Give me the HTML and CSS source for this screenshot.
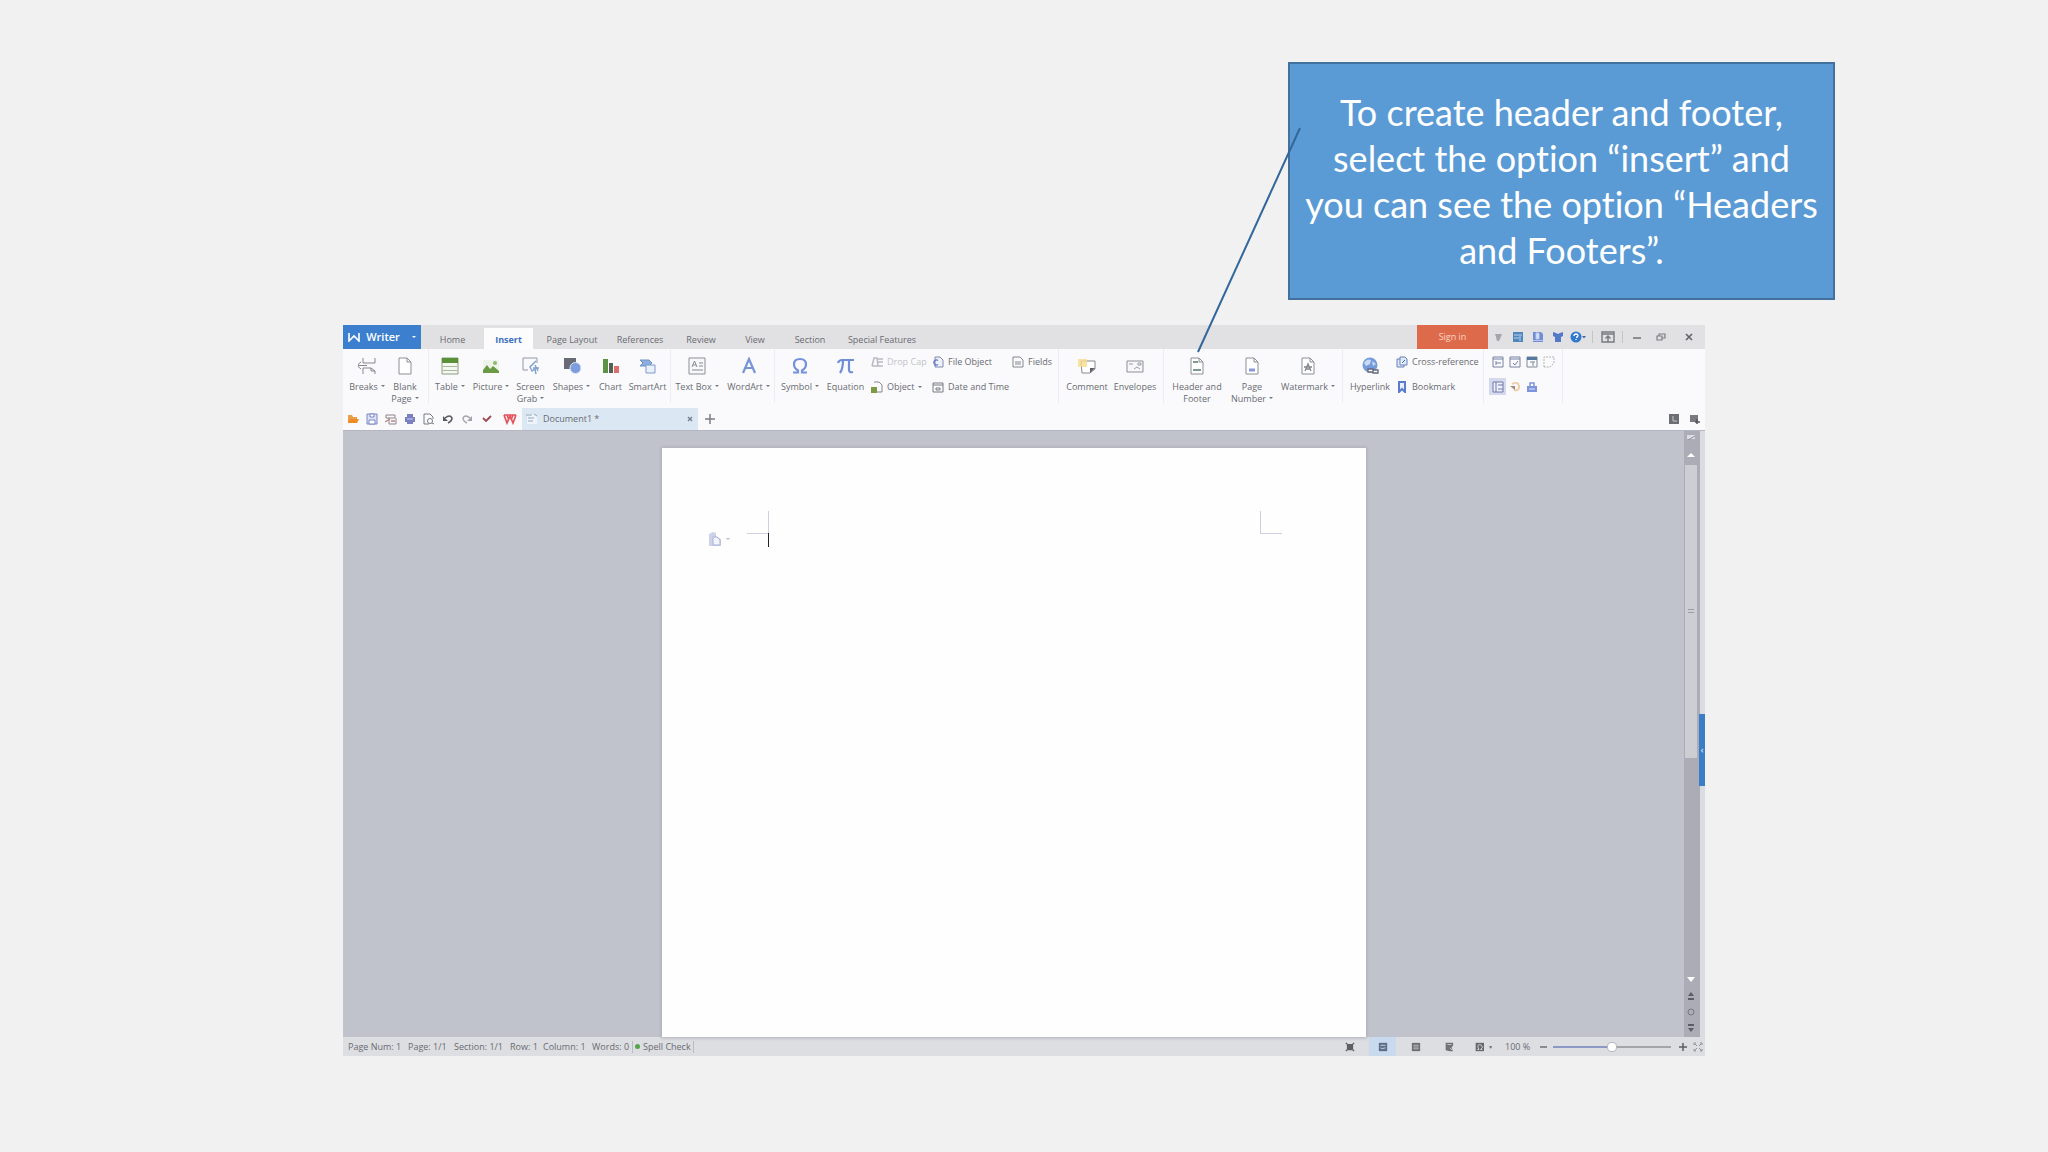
FILE: index.html
```html
<!DOCTYPE html>
<html lang="en">
<head>
<meta charset="utf-8">
<title>Writer - Insert header and footer</title>
<link rel="stylesheet" href="styles.css">
</head>
<body>
<svg class="defs" aria-hidden="true">
  <symbol id="sheet" viewBox="0 0 18 18"><path d="M3 1h8l4 4v12H3z M11 1v4h4" fill="#fff" stroke="#8d8f96"/></symbol>
</svg>
<main class="slide">
  <section class="window" aria-label="Writer">
    <header class="titlebar">
      <button class="brand"><svg width="12" height="10" viewBox="0 0 12 10"><path d="M1 1v8l5-5 5 5V1M1 9l3-3M11 9L8 6" fill="none" stroke="#fff" stroke-width="1.6"/></svg><span>Writer</span><i class="caret light"></i></button>
      <nav class="tabs">
        <a href="#" class="tab t-home">Home</a>
        <a href="#" class="tab t-insert active">Insert</a>
        <a href="#" class="tab t-layout">Page Layout</a>
        <a href="#" class="tab t-refs">References</a>
        <a href="#" class="tab t-review">Review</a>
        <a href="#" class="tab t-view">View</a>
        <a href="#" class="tab t-section">Section</a>
        <a href="#" class="tab t-special">Special Features</a>
      </nav>
      <button class="signin">Sign in</button>
      <div class="quick">
        <button aria-label="Skin"><svg width="12" height="12" viewBox="0 0 12 12"><path d="M3 3h7L7 10H5L4 6z" fill="#a3a5ab"/></svg></button>
        <button aria-label="Apps"><svg width="12" height="12" viewBox="0 0 12 12"><path d="M1 1h10v10H1z" fill="#4f87bd"/><path d="M2 4h8M2 7h5M8 5v5" stroke="#b8d3ec"/></svg></button>
        <button aria-label="Docs"><svg width="12" height="12" viewBox="0 0 12 12"><path d="M1 1h8l2 2v8H1z" fill="#708cd2"/><path d="M4 2h3v6H4zM1 9.500h10" fill="#dce5fa" stroke="#b4c4ee"/></svg></button>
        <button aria-label="Theme"><svg width="12" height="12" viewBox="0 0 12 12"><path d="M1 1l3 1 2 1 2-1 3-1v4L9 6v5H3V6L1 5z" fill="#5379c8"/></svg></button>
        <button aria-label="Help"><svg width="16" height="12" viewBox="0 0 16 12"><circle cx="6" cy="6" r="5.500" fill="#3178cf"/><path d="M4 5q0-2 2-2t2 1.500Q8 6 6 6.500M6 8v1" stroke="#fff" fill="none" stroke-width="1.300"/><path d="M12 5h4l-2 2.500z" fill="#43699d"/></svg></button>
      </div>
      <button class="toggle" aria-label="Hide ribbon"><svg width="14" height="12" viewBox="0 0 14 12"><path d="M1 1h12v10H1zM1 3h12M7 11V5M4.500 7.500L7 5l2.500 2.500" fill="none" stroke="#777a80" stroke-width="1.400"/></svg></button>
      <div class="winctl">
        <button aria-label="Minimize"><svg width="10" height="10" viewBox="0 0 10 10"><path d="M1 6h8" stroke="#6d6f74" stroke-width="1.500"/></svg></button>
        <button aria-label="Restore"><svg width="10" height="10" viewBox="0 0 10 10"><path d="M1 4h5v4H1zM3 4V2h6v4H6" fill="none" stroke="#7d7f84" stroke-width="1.200"/></svg></button>
        <button class="close" aria-label="Close"><svg width="10" height="10" viewBox="0 0 10 10"><path d="M2 2l6 6M8 2L2 8" stroke="#606268" stroke-width="1.600"/></svg></button>
      </div>
    </header>

    <div class="ribbon">
      <div class="group g-pages">
        <button class="tool"><svg viewBox="0 0 18 18"><path d="M5 1v5h12V1M5 17v-6h8l4 3v3M13 11v3h4M3 5L0 7.500v2L3 12M0 8.500h9" fill="none" stroke="#85878e"/></svg><span>Breaks<i class="caret"></i></span></button>
        <button class="tool"><svg><use href="#sheet"/></svg><span>Blank<br>Page<i class="caret"></i></span></button>
      </div>
      <div class="group g-media">
        <button class="tool"><svg viewBox="0 0 18 18"><path d="M1 1h16v16H1z" fill="#f4f8ef" stroke="#8c9a83"/><path d="M1 1h16v5H1z" fill="#5b9136"/><path d="M2 9.500h14M2 13.500h14" stroke="#a9b79e"/></svg><span>Table<i class="caret"></i></span></button>
        <button class="tool"><svg viewBox="0 0 18 18"><path d="M1 3h16v13H1z" fill="#eef4ea"/><path d="M1 16V13l4-5 3 4 3-3 6 5v2z" fill="#6a9b44"/><circle cx="13" cy="6" r="2" fill="#8eb772"/></svg><span>Picture<i class="caret"></i></span></button>
        <button class="tool"><svg viewBox="0 0 18 18"><path d="M6 13H1V1h14v5" fill="none" stroke="#8f98a8"/><path d="M14 4L8 10l2 4 3-2 1 5M11 11h6M13 8l3 6" stroke="#7f9fcb" fill="none" stroke-width="1.400"/></svg><span>Screen<br>Grab<i class="caret"></i></span></button>
        <button class="tool"><svg viewBox="0 0 18 18"><path d="M1 1h12v11H1z" fill="#686a76"/><circle cx="12.500" cy="11" r="5.500" fill="#7d9ddd" stroke="#dde7fb"/></svg><span>Shapes<i class="caret"></i></span></button>
        <button class="tool"><svg viewBox="0 0 18 18"><path d="M1 2h5v14H1z" fill="#5c9244"/><path d="M7 6h4v10H7z" fill="#555f52"/><path d="M12 9h5v7h-5z" fill="#dc6f6b"/></svg><span>Chart</span></button>
        <button class="tool"><svg viewBox="0 0 18 18"><path d="M1 3h9l3 3-3 3H1l3-3z" fill="#8eaede" stroke="#6d90c4"/><path d="M7 8h9v8H7z" fill="#e9f0fa" stroke="#7c9bcc"/></svg><span>SmartArt</span></button>
      </div>
      <div class="group g-text">
        <button class="tool"><svg viewBox="0 0 18 18"><path d="M1 1h16v16H1z" fill="#f8f8fa" stroke="#8d8f96"/><path d="M4 10l2.500-6L9 10M5 8h3M11 6h4M11 9h4M4 13h11" fill="none" stroke="#888b93"/></svg><span>Text Box<i class="caret"></i></span></button>
        <button class="tool"><svg viewBox="0 0 18 18"><path d="M3 16L9 2l6 14M5.500 11h7" fill="none" stroke="#7795d3" stroke-width="2.200"/></svg><span>WordArt<i class="caret"></i></span></button>
      </div>
      <div class="group g-symbols">
        <button class="tool"><svg viewBox="0 0 18 18"><path d="M2 15.500h5v-2Q3 11 3 7.500 3 2 9 2t6 5.500q0 3.500-4 6v2h5" fill="none" stroke="#7591dc" stroke-width="2.200"/></svg><span>Symbol<i class="caret"></i></span></button>
        <button class="tool"><svg viewBox="0 0 18 18"><path d="M1 6q1-3 4-3h12M6 3q0 9-3 13M12 3v10q0 3 4 2" fill="none" stroke="#6f8ed6" stroke-width="2.200"/></svg><span>Equation</span></button>
        <div class="rows three">
          <button class="mini off"><svg viewBox="0 0 12 12"><path d="M1 10l2-8h3l1 8M7 3h5M7 6h5M1 10h11" fill="none" stroke="#b9bac0" stroke-width="1.500"/></svg>Drop Cap</button>
          <button class="mini"><svg viewBox="0 0 12 12"><path d="M3 1h5l3 3v7H3z" fill="#eef1fb" stroke="#8089a8"/><path d="M6 8.500a2.500 2.500 0 1 1 0-4" fill="none" stroke="#6679c6" stroke-width="1.400"/></svg>File Object</button>
          <button class="mini"><svg viewBox="0 0 12 12"><path d="M1 1h7l3 3v7H1zM3 6h6M3 8h6" fill="none" stroke="#85878e"/></svg>Fields</button>
          <button class="mini"><svg viewBox="0 0 12 12"><path d="M3 1h5l3 3v7H5" fill="none" stroke="#85878e"/><path d="M0 6h6v6H0z" fill="#7e9a45"/></svg>Object<i class="caret"></i></button>
          <button class="mini"><svg viewBox="0 0 12 12"><path d="M1 2h10v9H1zM1 4h10M4 7h4v2H4z" fill="none" stroke="#777a82"/></svg>Date and Time</button>
        </div>
      </div>
      <div class="group g-comments">
        <button class="tool"><svg viewBox="0 0 18 18"><path d="M3 4h14v8l-5 4H4z" fill="#fff" stroke="#85878e"/><path d="M17 11h-5v5z" fill="#5f6167"/><path d="M0 2h9v8H0z" fill="#f7dc8f" opacity=".8"/></svg><span>Comment</span></button>
        <button class="tool"><svg viewBox="0 0 18 18"><path d="M1 4h16v11H1z" fill="#f8f8fa" stroke="#8d8f96"/><path d="M3 7h4M8 12l3-2 3 2M12 6h3v2h-3z" fill="none" stroke="#9b9da4"/></svg><span>Envelopes</span></button>
      </div>
      <div class="group g-header">
        <button class="tool"><svg viewBox="0 0 18 18"><use href="#sheet"/><path d="M5 5h5M5 13h8" stroke="#7d9a8e" stroke-width="2"/></svg><span>Header and<br>Footer</span></button>
        <button class="tool"><svg viewBox="0 0 18 18"><use href="#sheet"/><path d="M6 13h6" stroke="#8b98d8" stroke-width="3"/></svg><span>Page<br>Number<i class="caret"></i></span></button>
        <button class="tool"><svg viewBox="0 0 18 18"><use href="#sheet"/><path d="M6 14l3-7 3 7M5 10h8M7 12h4" fill="none" stroke="#85878e" stroke-width="1.300"/></svg><span>Watermark<i class="caret"></i></span></button>
      </div>
      <div class="group g-links">
        <button class="tool"><svg viewBox="0 0 18 18"><circle cx="9" cy="8" r="7.500" fill="#769bdb"/><path d="M3 6q3-5 7-3l-1 4-4 2zM11 4l4 3-3 2z" fill="#c9daf5"/><path d="M7 12h5v3H7zM12 13h5v3h-5z" fill="#fff" stroke="#62687a" stroke-width="1.300"/></svg><span>Hyperlink</span></button>
        <div class="rows">
          <button class="mini"><svg viewBox="0 0 12 12"><path d="M4 1h5l2 2v6H4zM4 3H1v8h7V9" fill="#dfe8f8" stroke="#6582b8"/><path d="M6 7l3-3" stroke="#4369ad"/></svg>Cross-reference</button>
          <button class="mini"><svg viewBox="0 0 12 12"><path d="M3 11V1h6v10L6 8z" fill="#e8eefc" stroke="#5a7bd0" stroke-width="2"/></svg>Bookmark</button>
        </div>
      </div>
      <div class="group g-forms">
        <button class="cell" aria-label="Text field"><svg viewBox="0 0 12 12"><path d="M1 1h10v10H1zM1 3h10M4 7h5M4 5v4" fill="none" stroke="#7780a3"/></svg></button>
        <button class="cell" aria-label="Check field"><svg viewBox="0 0 12 12"><path d="M1 1h10v10H1zM1 3h10M4 7l2 2 3-4" fill="none" stroke="#7780a3"/></svg></button>
        <button class="cell" aria-label="List field"><svg viewBox="0 0 12 12"><path d="M1 1h10v10H1zM4 6h5M7 6v4" fill="none" stroke="#7d8798"/><path d="M1 1h10v3H1z" fill="#56799d"/></svg></button>
        <button class="cell" aria-label="Frame"><svg viewBox="0 0 12 12"><path d="M1 11V1h10v6L7 11z" fill="none" stroke="#b2b3b8" stroke-dasharray="2 1"/></svg></button>
        <button class="cell on" aria-label="Shading"><svg viewBox="0 0 12 12"><path d="M1 1h10v10H1zM4 1v10M6 4h5M6 8h5" fill="#eef0fb" stroke="#6e78a8"/></svg></button>
        <button class="cell" aria-label="Reset"><svg viewBox="0 0 12 12"><path d="M3 3q6-3 7 2t-5 4" fill="none" stroke="#efcda6" stroke-width="2"/><path d="M1 5h5v4z" fill="#a08a7c"/></svg></button>
        <button class="cell" aria-label="Protect"><svg viewBox="0 0 12 12"><path d="M4 5V2h4v3" fill="none" stroke="#7d93dc" stroke-width="1.500"/><path d="M1 5h10v6H1z" fill="#7d93dc"/><path d="M3 8h6" stroke="#dfe6fb"/></svg></button>
      </div>
    </div>

    <div class="docbar">
      <div class="shortcuts">
        <button aria-label="Open"><svg viewBox="0 0 12 12"><path d="M1 2h4l1 2h4v6H1z" fill="#e9a04c"/><path d="M3 6h9l-2 4H1z" fill="#f08a24"/></svg></button>
        <button aria-label="Save"><svg viewBox="0 0 12 12"><path d="M1 1h10v10H1z" fill="#dfe3f7" stroke="#7b86c4"/><path d="M4 1h4v3H4zM3 7h6v4H3z" fill="#fff" stroke="#7b86c4"/></svg></button>
        <button aria-label="Export"><svg viewBox="0 0 12 12"><path d="M1 2h9v3H1zM4 5v6h7V5" fill="none" stroke="#8d8288"/><path d="M0 9l5-3M6 8h4" stroke="#b78583" stroke-width="1.400"/></svg></button>
        <button aria-label="Print"><svg viewBox="0 0 12 12"><path d="M3 1h6v3h2v5H9v2H3V9H1V4h2z" fill="#7a7fc0"/><path d="M3 6h6" stroke="#c9cdf0"/></svg></button>
        <button aria-label="Print preview"><svg viewBox="0 0 12 12"><path d="M6 11H1V1h6l3 3v2M7 9l4 2" fill="none" stroke="#777a80"/><circle cx="7" cy="8" r="2.500" fill="#fff" stroke="#777a80"/></svg></button>
        <button aria-label="Undo"><svg viewBox="0 0 12 12"><path d="M3 5q5-4 7 0 0 3-4 5" fill="none" stroke="#585b61" stroke-width="1.600"/><path d="M1 3v5h5z" fill="#585b61"/></svg></button>
        <button aria-label="Redo"><svg viewBox="0 0 12 12"><path d="M9 5Q4 1 2 5q0 3 4 5" fill="none" stroke="#a2a4a9" stroke-width="1.400"/><path d="M11 3v5H6z" fill="#a2a4a9"/></svg></button>
      </div>
      <button class="mark" aria-label="Customize"><svg viewBox="0 0 12 12"><path d="M2 5l3 3 2-2 3-3" fill="none" stroke="#9c4a50" stroke-width="1.800"/></svg></button>
      <button class="mark wps" aria-label="Writer home"><svg viewBox="0 0 14 12"><path d="M1 2h12M1 2l3 8 3-7 3 7 3-8M4 2l2 5M8 7l2-5" fill="none" stroke="#e4525c" stroke-width="1.700"/></svg></button>
      <div class="doctab">
        <svg viewBox="0 0 12 12"><path d="M1 1h7l3 3v7H1z" fill="#eef4fb"/><path d="M0 2h6M2 5h6M2 8h5M8 1l3 2" stroke="#93a3bd"/></svg>
        <span>Document1 *</span>
        <button aria-label="Close document"><svg viewBox="0 0 8 8"><path d="M2 2l4 4M6 2L2 6" stroke="#73808f" stroke-width="1.400"/></svg></button>
      </div>
      <button class="add" aria-label="New document"><svg viewBox="0 0 12 12"><path d="M6 1v10M1 6h10" stroke="#7d7f84" stroke-width="1.500"/></svg></button>
      <div class="docright">
        <button aria-label="Window list"><svg viewBox="0 0 12 12"><path d="M1 1h10v10H1z" fill="#6c6e73"/><path d="M5 3v5h4" fill="none" stroke="#c6c7cb"/></svg></button>
        <button aria-label="Switch window"><svg viewBox="0 0 12 12"><path d="M1 2h8v7H1z" fill="#797b80"/><path d="M8 6v5M6 9h5" stroke="#54565b" stroke-width="1.500"/></svg></button>
      </div>
    </div>

    <div class="workspace">
      <article class="page" aria-label="Document page">
        <button class="paste" aria-label="Paste options"><svg width="22" height="16" viewBox="0 0 22 16"><path d="M1 3l4-2 3 1v3l5 3v7H1z" fill="#cdd2ea"/><path d="M5 6h4l3 3v5H5z" fill="#f2f4fc" stroke="#a9b1d6"/><path d="M18 7h4l-2 2z" fill="#b4b8ce"/></svg></button>
        <i class="corner left"></i>
        <i class="cursor"></i>
        <i class="corner right"></i>
      </article>
      <div class="scroll">
        <svg width="16" height="34" viewBox="0 0 16 34"><path d="M3 4h8v4H3z" fill="#dcdee3"/><path d="M4 9l7-4" stroke="#8f9199"/><path d="M3 26l4-4 4 4z" fill="#fff"/></svg>
        <div class="thumb"></div>
        <svg class="foot" width="16" height="68" viewBox="0 0 16 68"><path d="M3 8h8l-4 5z" fill="#fff"/><path d="M4 27l3-4 3 4zM4 29h6v2H4zM4 55h6v2H4zM4 59h6l-3 4z" fill="#5b5d66"/><circle cx="7" cy="43" r="3" fill="none" stroke="#777a83"/></svg>
      </div>
      <div class="edge"><button aria-label="Open task pane">‹</button></div>
    </div>

    <footer class="status">
      <div class="facts">
        <span class="f-num">Page Num: 1</span><span class="f-page">Page: 1/1</span><span class="f-sec">Section: 1/1</span><span class="f-row">Row: 1</span><span class="f-col">Column: 1</span><span class="f-words">Words: 0</span><span class="f-spell"><i class="dot"></i>Spell Check</span>
      </div>
      <div class="views">
        <button aria-label="Full screen"><svg viewBox="0 0 12 12"><path d="M3 3h6v6H3zM1 1l2 2M11 1L9 3M1 11l2-2M11 11L9 9" fill="#5d5f65" stroke="#5d5f65" stroke-width="1.500"/></svg></button>
        <button class="on" aria-label="Page view"><svg viewBox="0 0 12 12"><path d="M1 1h10v10H1z" fill="#5d6f88"/><path d="M3 4h6M3 7l2 1 4-1" fill="none" stroke="#d6e0ef"/></svg></button>
        <button aria-label="Outline"><svg viewBox="0 0 12 12"><path d="M1 1h10v10H1z" fill="#707278"/><path d="M3 4h6M3 6h6M3 8h6" stroke="#bfc0c4"/></svg></button>
        <button aria-label="Web layout"><svg viewBox="0 0 12 12"><path d="M2 1h9v3l-2 3 2 4H7L2 10z" fill="#707278"/><path d="M4 3h5M7 7l3 3" stroke="#caccd0"/></svg></button>
        <button class="wide" aria-label="Eye protection"><svg width="22" height="12" viewBox="0 0 22 12"><path d="M1 1h10v10H1z" fill="#66686e"/><path d="M3 9h2Q3 6 4 4t4 0-1 5h2" fill="none" stroke="#e4e5e8"/><path d="M17 5h4l-2 3z" fill="#66686e"/></svg></button>
      </div>
      <label class="zoomval" for="zoom">100 %</label>
      <button class="step" aria-label="Zoom out"><svg viewBox="0 0 10 10"><path d="M2 5h7" stroke="#6d6f74" stroke-width="1.500"/></svg></button>
      <input type="range" id="zoom" min="0" max="200" value="100">
      <button class="step" aria-label="Zoom in"><svg viewBox="0 0 10 10"><path d="M1 5h8M5 1v8" stroke="#5d5f65" stroke-width="1.500"/></svg></button>
      <button class="step fit" aria-label="Fit"><svg viewBox="0 0 10 10"><path d="M1 3V1h2M7 1h2v2M9 7v2H7M3 9H1V7M2 2l2 2M8 2L6 4M8 8L6 6M2 8l2-2" fill="none" stroke="#8d8f95"/></svg></button>
    </footer>
  </section>

  <aside class="callout">To create header and footer, select the option “insert” and you can see the option “Headers and Footers”.</aside>
  <svg class="leader" width="112" height="232" viewBox="0 0 112 232" aria-hidden="true"><path d="M110 4L8 228" stroke="#33669a" stroke-width="2"/></svg>
</main>
</body>
</html>
```
FILE: styles.css
```css
* { box-sizing: border-box; }
body {
  margin: 0;
  background: #f1f1f2;
  font-family: "Open Sans", "Noto Sans", sans-serif;
  font-size: 9px;
  line-height: 12px;
  color: #696b72;
}
button {
  margin: 0; padding: 0; border: 0; background: none;
  font: inherit; color: inherit;
  display: flex; align-items: center; justify-content: center;
}
svg { display: block; flex: none; }
a { color: inherit; text-decoration: none; }
.defs { position: absolute; width: 0; height: 0; }
.slide {
  position: relative;
  min-height: 100vh;
  padding: 325px 343px 96px;
  display: flex;
}
.window { flex: 1; min-width: 0; display: flex; flex-direction: column; background: #fafafc; }
.caret {
  display: inline-block; margin-left: 3px; vertical-align: 3px;
  border: 2px solid transparent; border-top-color: #74767d; border-bottom: 0;
}

/* title bar */
.titlebar { display: flex; height: 24px; background: #e1e1e3; }
.brand { width: 78px; background: #3c7fce; color: #fff; font-size: 11px; font-weight: 600; gap: 6px; }
.caret.light { margin-left: 6px; border-top-color: #fff; }
.tabs { display: flex; flex: 1; min-width: 0; align-items: flex-end; }
.tab { height: 21px; padding-top: 6px; text-align: center; white-space: nowrap; }
.t-home { width: 63px; }
.t-insert { width: 49px; }
.t-layout { width: 78px; }
.t-refs { width: 58px; }
.t-review { width: 64px; }
.t-view { width: 44px; }
.t-section { width: 66px; }
.t-special { width: 78px; }
.tab.active { background: #fcfcfd; color: #3e70bd; font-weight: 700; }
.signin { width: 71px; background: #dd6b4b; color: #fbd5c6; }
.quick, .winctl { display: flex; }
.quick button { width: 20px; }
.toggle { width: 31px; height: 12px; margin: 6px 2px 6px 4px; border: solid #c3c4c8; border-width: 0 1px; }
.winctl button { width: 24px; }
.winctl .close { width: 32px; }

/* ribbon */
.ribbon { display: flex; height: 59px; }
.group { display: grid; height: 54px; border-right: 1px solid #ededf1; align-content: start; }
.tool { flex-direction: column; justify-content: flex-start; padding-top: 8px; gap: 6px; white-space: nowrap; text-align: center; }
.tool svg { width: 18px; height: 18px; }
.g-pages { grid-template-columns: 38px 38px; padding: 0 4px 0 5px; }
.g-media { grid-template-columns: 42px 40px 39px 43px 35px 39px; padding-right: 3px; }
.g-text { grid-template-columns: 52px 51px; }
.g-symbols { grid-template-columns: 50px 41px 192px; }
.g-comments { grid-template-columns: 50px 46px; padding: 0 5px 0 3px; }
.g-header { grid-template-columns: 60px 50px 62px; padding: 0 3px; }
.g-links { grid-template-columns: 46px 90px; padding-left: 4px; }
.g-forms { grid-template-columns: repeat(4, 17px); padding: 0 5px; grid-auto-rows: 25px; }
.rows { display: grid; grid-auto-rows: 25px; padding-left: 3px; }
.rows.three { grid-template-columns: 61px 80px 48px; padding-left: 5px; }
.mini { justify-content: flex-start; gap: 4px; white-space: nowrap; }
.mini svg, .cell svg { width: 12px; height: 12px; }
.mini .caret { margin: 0; }
.mini.off { color: #c2c3c8; }
.cell.on { background: #d5d9ee; height: 17px; align-self: center; }

/* document tabs */
.docbar { display: flex; height: 22px; }
.docbar svg { width: 12px; height: 12px; }
.shortcuts { display: flex; }
.shortcuts button { width: 19px; }
.mark { width: 22px; }
.mark.wps { width: 24px; }
.mark.wps svg { width: 14px; }
.doctab { display: flex; align-items: center; gap: 5px; width: 176px; padding: 0 4px; background: #dbe7f2; }
.doctab button { margin-left: auto; }
.doctab button svg { width: 8px; height: 8px; }
.add { width: 24px; }
.docright { display: flex; margin-left: auto; }
.docright button { width: 21px; }

/* workspace */
.workspace {
  flex: 1; display: flex; min-height: 300px;
  border-top: 1px solid #b4b6c1;
  background: #c0c2cc;
}
.page {
  position: relative; flex: none; width: 704px; margin: 17px auto 0;
  background: #fefefe; box-shadow: 0 0 3px 1px #adaeb9;
}
.corner { position: absolute; top: 63px; width: 22px; height: 23px; border: 0 solid #cfcfe0; border-bottom-width: 1px; }
.corner.left { left: 85px; border-right-width: 1px; }
.corner.right { left: 598px; border-left-width: 1px; }
.cursor { position: absolute; left: 106px; top: 85px; width: 1px; height: 14px; background: #222; }
.paste { position: absolute; left: 46px; top: 83px; }
.scroll { display: flex; flex-direction: column; width: 16px; background: #abacb5; }
.thumb { width: 12px; height: 293px; margin-left: 1px; background: repeating-linear-gradient(#9b9da5 0 1px, #cdced3 1px 3px) center / 6px 6px no-repeat #cdced3; }
.scroll .foot { margin-top: auto; }
.edge { width: 5px; background: #dadce1; padding-top: 283px; }
.edge button { width: 6px; height: 72px; margin-left: -1px; background: #397ec7; color: #fff; }

/* status bar */
.status { display: flex; align-items: center; height: 19px; padding-left: 5px; background: #dcdee1; white-space: nowrap; }
.facts { display: flex; flex: 1; }
.f-num { width: 60px; }
.f-page { width: 46px; }
.f-sec { width: 56px; }
.f-row { width: 33px; }
.f-col { width: 49px; }
.f-words { width: 40px; }
.f-spell { display: flex; align-items: center; gap: 3px; padding: 0 2px; border: solid #b9bbc1; border-width: 0 1px; }
.dot { width: 5px; height: 5px; border-radius: 50%; background: #55a547; }
.views { display: flex; gap: 6px; align-self: stretch; }
.views button { width: 27px; }
.views svg { width: 10px; height: 10px; }
.views .on { background: #c9daee; }
.views .wide { width: 32px; }
.views .wide svg { width: 22px; }
.zoomval { width: 35px; padding-left: 5px; }
.step { width: 15px; }
.step svg { width: 10px; height: 10px; }
#zoom {
  appearance: none; width: 118px; height: 12px; margin: 0 4px 0 3px; background: none;
}
#zoom::-webkit-slider-runnable-track { height: 2px; background: linear-gradient(90deg, #8d98c4 50%, #a3a5ab 50%); }
#zoom::-webkit-slider-thumb { appearance: none; width: 10px; height: 10px; margin-top: -4px; border: 1px solid #b5b7bd; border-radius: 4px; background: #fff; }

/* annotation laid over the slide */
.callout {
  position: absolute; left: 1288px; top: 62px; width: 547px; min-height: 238px;
  padding: 0 12px;
  display: flex; align-items: center; justify-content: center;
  border: 2px solid #41719c; background: #5b9bd5; color: #fff;
  font-family: Lato, sans-serif; font-size: 36px; line-height: 46px; text-align: center;
  font-variant-ligatures: none;
}
.leader { position: absolute; left: 1190px; top: 124px; }
```
